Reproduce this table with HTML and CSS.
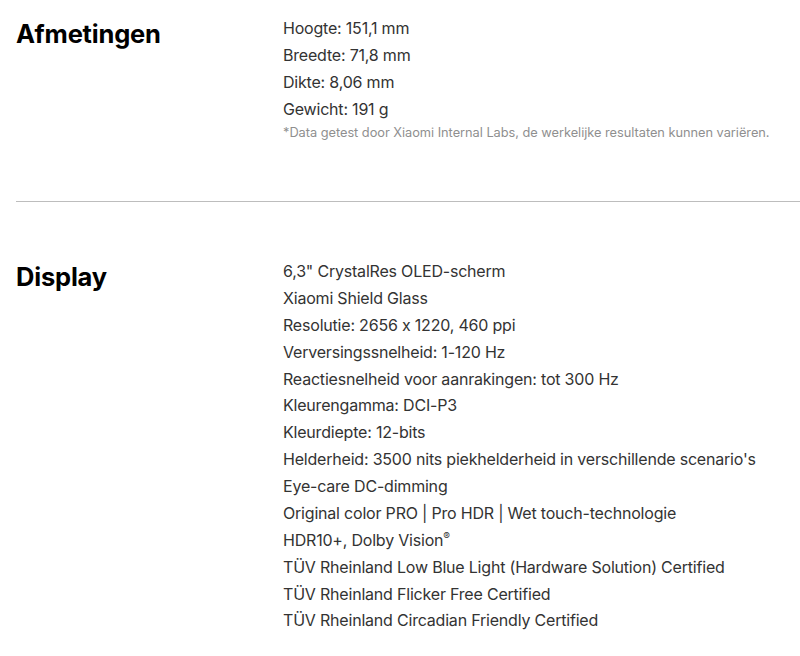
FILE: index.html
```html
<!DOCTYPE html>
<html lang="nl">
<head>
<meta charset="utf-8">
<link rel="stylesheet" href="styles.css">
</head>
<body>
<main class="specs">
  <section class="spec spec-first">
    <h2 class="spec-title">Afmetingen</h2>
    <div class="spec-body">
      <p>Hoogte: 151,1 mm</p>
      <p>Breedte: 71,8 mm</p>
      <p>Dikte: 8,06 mm</p>
      <p>Gewicht: 191 g</p>
      <p class="note">*Data getest door Xiaomi Internal Labs, de werkelijke resultaten kunnen variëren.</p>
    </div>
  </section>
  <section class="spec">
    <h2 class="spec-title">Display</h2>
    <div class="spec-body">
      <p>6,3" CrystalRes OLED-scherm</p>
      <p>Xiaomi Shield Glass</p>
      <p>Resolutie: 2656 x 1220, 460 ppi</p>
      <p>Verversingssnelheid: 1-120 Hz</p>
      <p>Reactiesnelheid voor aanrakingen: tot 300 Hz</p>
      <p>Kleurengamma: DCI-P3</p>
      <p>Kleurdiepte: 12-bits</p>
      <p>Helderheid: 3500 nits piekhelderheid in verschillende scenario's</p>
      <p>Eye-care DC-dimming</p>
      <p>Original color PRO | Pro HDR | Wet touch-technologie</p>
      <p>HDR10+, Dolby Vision<sup>®</sup></p>
      <p>TÜV Rheinland Low Blue Light (Hardware Solution) Certified</p>
      <p>TÜV Rheinland Flicker Free Certified</p>
      <p>TÜV Rheinland Circadian Friendly Certified</p>
    </div>
  </section>
</main>
</body>
</html>
```
FILE: styles.css
```css
* { box-sizing: border-box; }
html, body { margin: 0; padding: 0; background: #fff; }
body {
  font-family: Inter, "Noto Sans", sans-serif;
  font-feature-settings: "calt" 0;
  color: #333;
}
.specs { padding-left: 16px; }
.spec {
  display: grid;
  grid-template-columns: 267px 1fr;
  padding: 56px 0 58px;
  border-bottom: 1px solid #bdbdbd;
}
.spec-first { padding-top: 15px; }
.spec:last-child { border-bottom: none; }
.spec-title {
  margin: 3px 0 0;
  font-size: 25.5px;
  font-weight: 700;
  line-height: 32px;
  letter-spacing: -0.2px;
  color: #000;
}
.spec-body p {
  margin: 0;
  font-size: 16px;
  line-height: 26.88px;
  letter-spacing: -0.2px;
  white-space: nowrap;
}
.spec-first .spec-body p { line-height: 27px; }
.spec-body sup { font-size: 10px; vertical-align: top; line-height: 18px; }
.spec-first .spec-body .note {
  font-size: 12.8px;
  color: #8f8f8f;
  line-height: 20px;
  letter-spacing: -0.03px;
}
```
